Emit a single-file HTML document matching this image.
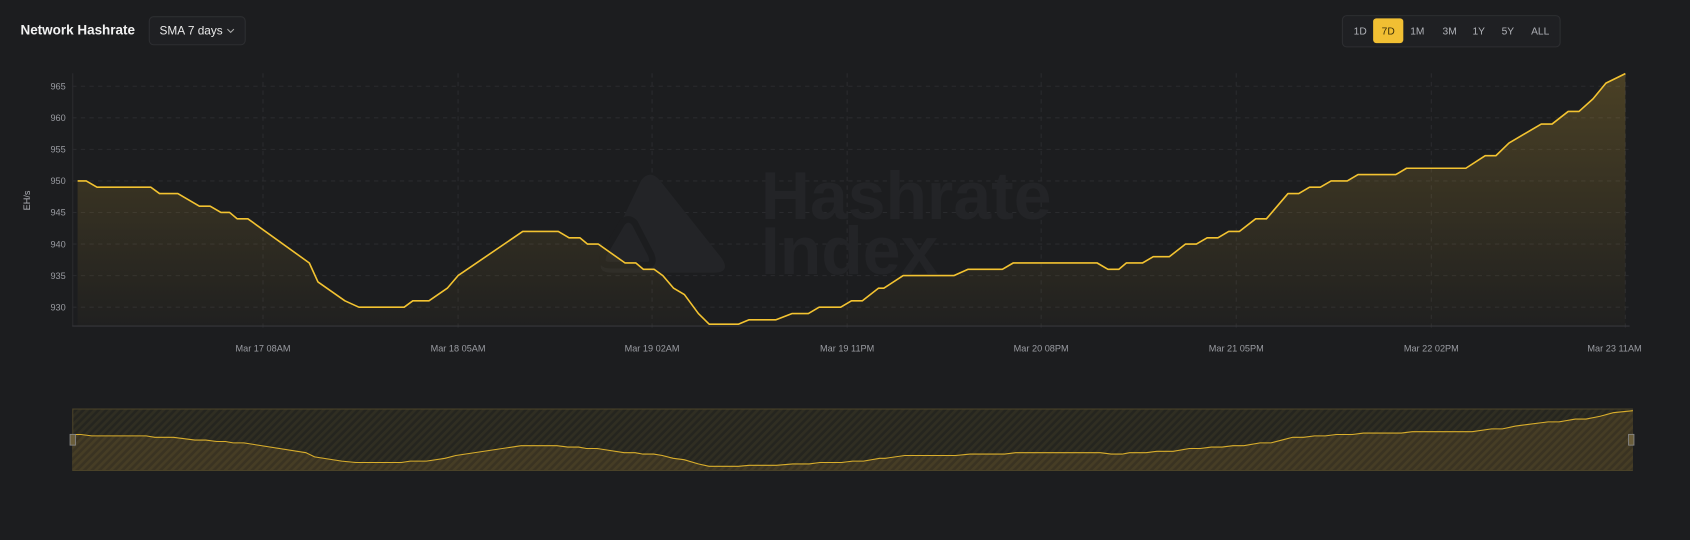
<!DOCTYPE html>
<html><head><meta charset="utf-8"><style>
html,body{margin:0;padding:0;background:#1c1d1f;}
svg{display:block;font-family:"Liberation Sans",sans-serif;}
</style></head><body>
<svg id="s" width="1690" height="540" viewBox="0 0 1568 501" preserveAspectRatio="none">
<defs>
<linearGradient id="g" x1="0" y1="0" x2="0" y2="1">
<stop offset="0" stop-color="#f0bf3a" stop-opacity="0.22"/>
<stop offset="1" stop-color="#f0bf3a" stop-opacity="0.02"/>
</linearGradient>
<pattern id="h" width="5" height="5" patternUnits="userSpaceOnUse" patternTransform="rotate(45)">
<rect width="5" height="5" fill="#25251f"/>
<rect width="2.5" height="5" fill="#302e22"/>
</pattern>
<pattern id="h2" width="5" height="5" patternUnits="userSpaceOnUse" patternTransform="rotate(45)">
<rect width="5" height="5" fill="#3a3322"/>
<rect width="2.5" height="5" fill="#463d25"/>
</pattern>
</defs>
<rect width="1568" height="501" fill="#1c1d1f"/>
<text x="19" y="32" fill="#f2f2f2" font-size="12.5" font-weight="bold">Network Hashrate</text>
<rect x="138.5" y="15.5" width="89" height="26" rx="4" fill="#1f2023" stroke="#2d2e31"/>
<text x="148" y="32" fill="#e8e8e8" font-size="11">SMA 7 days</text>
<path d="M211 27l3 3 3-3" stroke="#aaa" fill="none" stroke-width="1"/>
<rect x="1245.5" y="14.5" width="202" height="29" rx="4" fill="#1f2023" stroke="#2d2e31"/>
<rect x="1274" y="17" width="28" height="23" rx="3" fill="#f1bf33"/>
<g font-size="9.5" fill="#b0b2b8" text-anchor="middle">
<text x="1262" y="32">1D</text><text x="1288" y="32" fill="#3a2e08">7D</text><text x="1315" y="32">1M</text><text x="1345" y="32">3M</text><text x="1372" y="32">1Y</text><text x="1399" y="32">5Y</text><text x="1429" y="32">ALL</text>
</g>
<g id="grid" stroke="#2a2b2e" stroke-dasharray="4 4" stroke-width="1"></g>
<g fill="#232427">
<path d="M595 167 Q603 157 612 167 L670 240 Q678 253 662 253 L568 253 Q552 253 560 240 Z"/>
<path d="M589 207 Q583 200 577 207 L560 236 Q556 246 566 246 L600 246 Q608 246 604 236 Z" fill="none" stroke="#1c1d1f" stroke-width="6" stroke-linejoin="round"/>
<text x="706" y="203" font-size="63" font-weight="bold">Hashrate</text>
<text x="706" y="254" font-size="63" font-weight="bold">Index</text>
</g>
<line x1="67" y1="302.5" x2="1512" y2="302.5" stroke="#36373b"/>
<line x1="67.5" y1="68" x2="67.5" y2="302" stroke="#2a2b2e"/>
<g id="ylab" font-size="8.5" fill="#9a9ca2" text-anchor="end"></g>
<g id="xlab" font-size="8.5" fill="#9a9ca2" text-anchor="middle"></g>
<text transform="translate(28,186) rotate(-90)" font-size="8.5" fill="#b0b2b8" text-anchor="middle">EH/s</text>
<path id="area" fill="url(#g)"/>
<path id="line" fill="none" stroke="#f3c331" stroke-width="1.5" stroke-linejoin="round"/>
<rect x="67.5" y="379.5" width="1447" height="57" fill="url(#h)" stroke="#4a4228"/>
<path id="marea" fill="url(#h2)"/>
<path id="mline" fill="none" stroke="#d9ae2c" stroke-width="1"/>
<rect x="65" y="403" width="5" height="10" fill="#6a5d3a" stroke="#888" stroke-width="0.8"/>
<rect x="1511" y="403" width="5" height="10" fill="#6a5d3a" stroke="#888" stroke-width="0.8"/>
</svg>
<script>
var P=[[72,950],[80,950],[90,949],[140,949],[148,948],[165,948],[185,946],[195,946],[205,945],[213,945],[220,944],[230,944],[287,937],[295,934],[320,931],[333,930],[375,930],[383,931],[398,931],[415,933],[425,935],[485,942],[518,942],[528,941],[538,941],[545,940],[555,940],[580,937],[590,937],[597,936],[607,936],[615,935],[625,933],[635,932],[648,929],[658,927.3],[685,927.3],[695,928],[720,928],[735,929],[750,929],[760,930],[780,930],[790,931],[800,931],[815,933],[820,933],[838,935],[885,935],[898,936],[930,936],[940,937],[1018,937],[1028,936],[1038,936],[1045,937],[1060,937],[1070,938],[1085,938],[1100,940],[1110,940],[1120,941],[1130,941],[1140,942],[1150,942],[1165,944],[1175,944],[1185,946],[1195,948],[1205,948],[1215,949],[1225,949],[1235,950],[1250,950],[1260,951],[1295,951],[1305,952],[1360,952],[1378,954],[1388,954],[1400,956],[1430,959],[1440,959],[1455,961],[1465,961],[1478,963],[1490,965.5],[1508,967]];
function Y(v){return 80+(965-v)*5.857}
var d=P.map(function(p,i){return (i?'L':'M')+p[0]+' '+Y(p[1]).toFixed(1)}).join('');
document.getElementById('line').setAttribute('d',d);
document.getElementById('area').setAttribute('d',d+'L1508 302L72 302Z');
function MX(x){return 67+(x-72)*1448/1436}function MY(v){return 381+(967-v)*1.3}
var m=P.map(function(p,i){return (i?'L':'M')+MX(p[0]).toFixed(1)+' '+MY(p[1]).toFixed(1)}).join('');
document.getElementById('mline').setAttribute('d',m);
document.getElementById('marea').setAttribute('d',m+'L1515 436L67 436Z');
var ns='http://www.w3.org/2000/svg',g=document.getElementById('grid'),yl=document.getElementById('ylab'),xl=document.getElementById('xlab');
for(var v=930;v<=965;v+=5){var y=Y(v);var l=document.createElementNS(ns,'line');l.setAttribute('x1',67);l.setAttribute('x2',1512);l.setAttribute('y1',y);l.setAttribute('y2',y);g.appendChild(l);
var t=document.createElementNS(ns,'text');t.setAttribute('x',61);t.setAttribute('y',y+3);t.textContent=v;yl.appendChild(t);}
var xs=[244,425,605,786,966,1147,1328,1508],lb=['Mar 17 08AM','Mar 18 05AM','Mar 19 02AM','Mar 19 11PM','Mar 20 08PM','Mar 21 05PM','Mar 22 02PM','Mar 23 11AM'];
xs.forEach(function(x,i){var l=document.createElementNS(ns,'line');l.setAttribute('x1',x);l.setAttribute('x2',x);l.setAttribute('y1',68);l.setAttribute('y2',307);g.appendChild(l);
var t=document.createElementNS(ns,'text');t.setAttribute('x',i==7?1498:x);t.setAttribute('y',326);t.textContent=lb[i];xl.appendChild(t);});
</script>
</body></html>
